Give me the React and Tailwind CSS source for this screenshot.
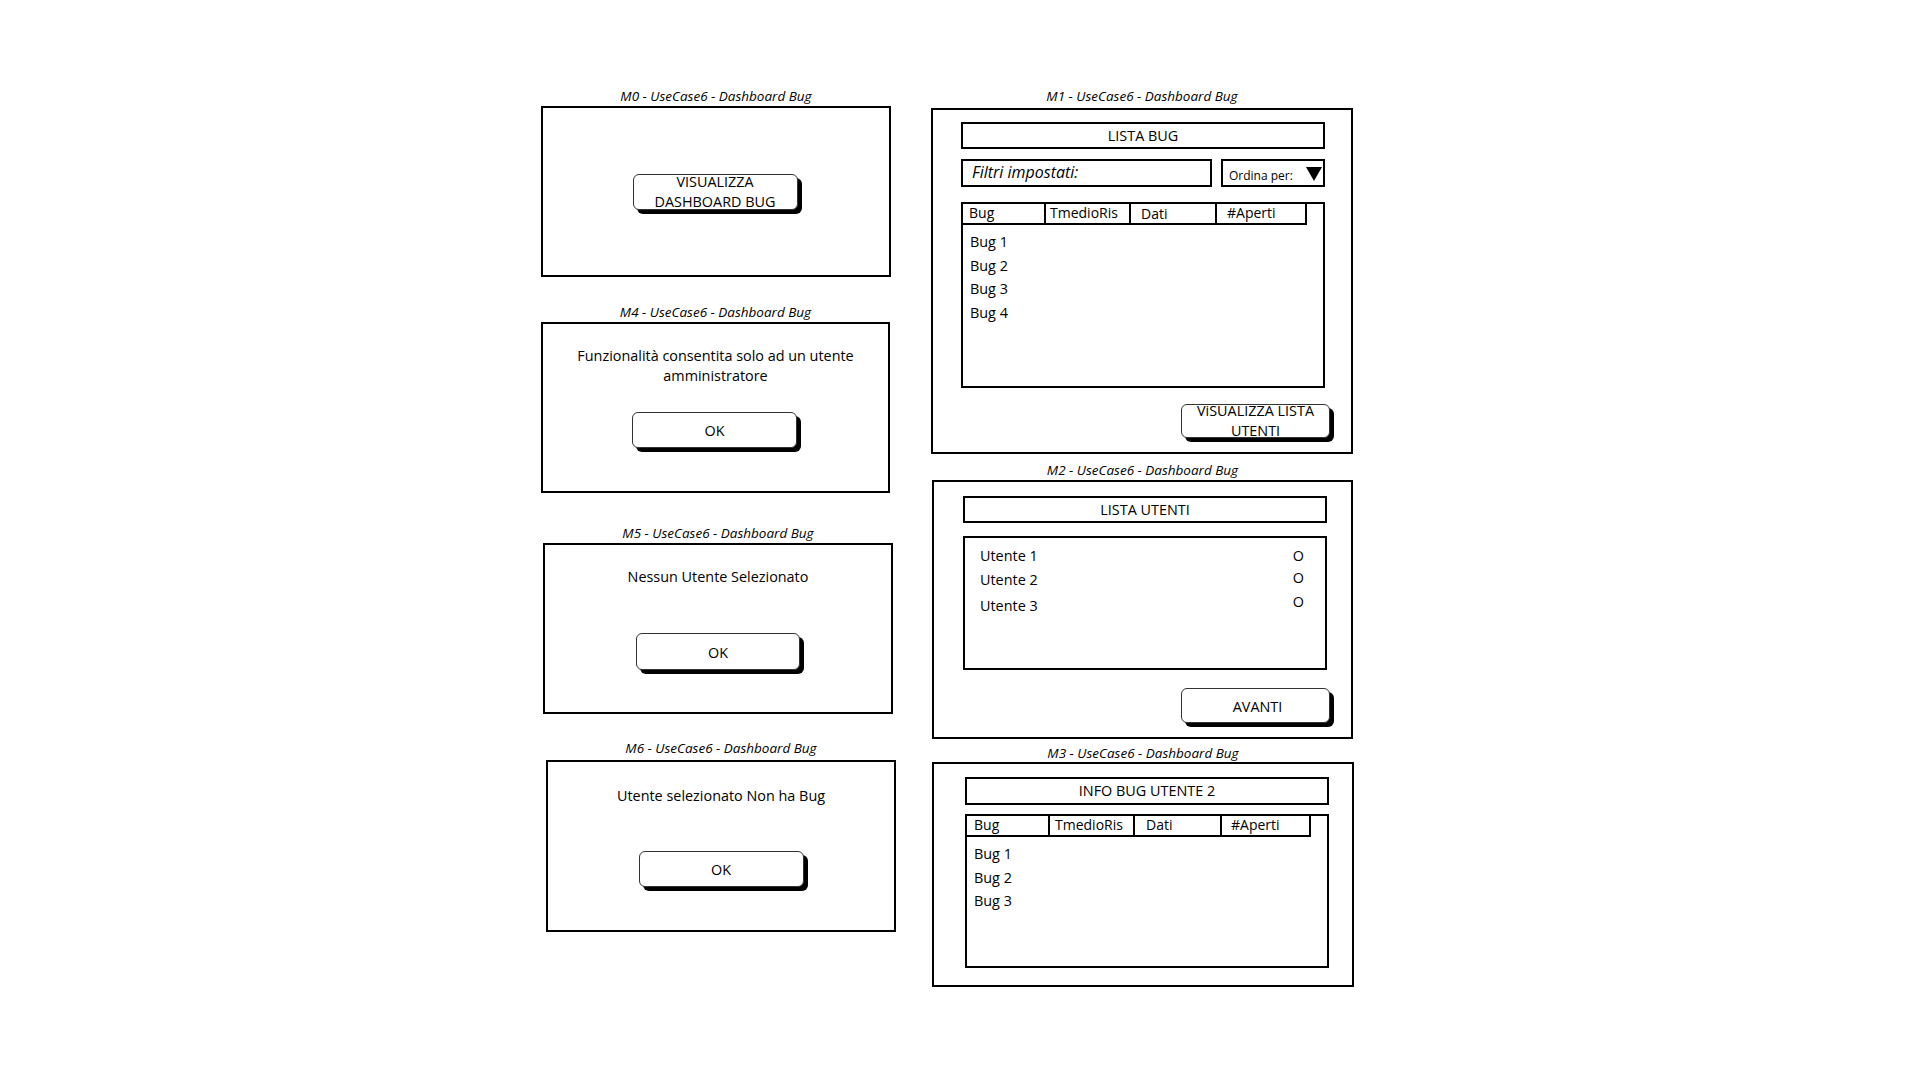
import React from 'react';

const font = "font-['Open_Sans',sans-serif]";

function Title({ children, mb }) {
  return (
    <div className={`text-[13.5px] italic leading-[16px] text-center text-black ${mb}`}>{children}</div>
  );
}

function Bottone({ children, className = '' }) {
  return (
    <div
      className={`bg-white border border-[#333] rounded-[6px] shadow-[4px_4px_0_0_#000] text-[14.4px] text-black text-center ${className}`}
    >
      {children}
    </div>
  );
}

function Tabella({ cells, rows, height }) {
  return (
    <div className={`w-[364px] border-2 border-black ${height}`}>
      <div className="flex h-[21px]">
        {cells.map((c) => (
          <div
            key={c.label}
            className={`h-full border-r-2 border-b-2 border-black text-[14px] leading-[17px] ${c.w} ${c.pl}`}
          >
            {c.label}
          </div>
        ))}
      </div>
      <div className="pt-[5px] pl-[7px] text-[14.4px] leading-[23.5px]">
        {rows.map((r) => (
          <div key={r}>{r}</div>
        ))}
      </div>
    </div>
  );
}

function BoxTitolo({ children, h }) {
  return (
    <div className={`w-[364px] border-2 border-black flex items-center justify-center text-[14.4px] ${h}`}>
      {children}
    </div>
  );
}

export default function App() {
  return (
    <div className={`w-[1920px] h-[1080px] bg-white text-black flex pt-[88px] pl-[541px] ${font}`}>
      {/* colonna sinistra */}
      <div className="w-[390px] flex flex-col items-start">
        <div>
          <Title mb="mb-[2px]">M0 - UseCase6 - Dashboard Bug</Title>
          <div className="w-[350px] h-[171px] border-2 border-black flex items-center justify-center">
            <Bottone className="w-[165px] h-[36px] flex flex-col items-center justify-center leading-[20px] -translate-x-[1px]">
              <span>VISUALIZZA</span>
              <span>DASHBOARD BUG</span>
            </Bottone>
          </div>
        </div>

        <div className="mt-[27px]">
          <Title mb="mb-[2px]">M4 - UseCase6 - Dashboard Bug</Title>
          <div className="w-[349px] h-[171px] border-2 border-black flex flex-col items-center pt-[22px]">
            <div className="text-[14.4px] leading-[20px] text-center w-[290px]">
              Funzionalità consentita solo ad un utente amministratore
            </div>
            <Bottone className="mt-[26px] w-[165px] h-[36px] leading-[36px] -translate-x-[1px]">OK</Bottone>
          </div>
        </div>

        <div className="mt-[32px] ml-[2px]">
          <Title mb="mb-[2px]">M5 - UseCase6 - Dashboard Bug</Title>
          <div className="w-[350px] h-[171px] border-2 border-black flex flex-col items-center pt-[22px]">
            <div className="text-[14.4px] leading-[20px] text-center">Nessun Utente Selezionato</div>
            <Bottone className="mt-[46px] w-[164px] h-[37px] leading-[37px]">OK</Bottone>
          </div>
        </div>

        <div className="mt-[26px] ml-[5px]">
          <Title mb="mb-[4px]">M6 - UseCase6 - Dashboard Bug</Title>
          <div className="w-[350px] h-[172px] border-2 border-black flex flex-col items-center pt-[24px]">
            <div className="text-[14.4px] leading-[20px] text-center">Utente selezionato Non ha Bug</div>
            <Bottone className="mt-[45px] w-[165px] h-[36px] leading-[36px]">OK</Bottone>
          </div>
        </div>
      </div>

      {/* colonna destra */}
      <div className="flex flex-col items-start">
        <div>
          <Title mb="mb-[4px]">M1 - UseCase6 - Dashboard Bug</Title>
          <div className="w-[422px] h-[346px] border-2 border-black pl-[28px] pt-[12px]">
            <BoxTitolo h="h-[27px]">LISTA BUG</BoxTitolo>
            <div className="mt-[10px] flex gap-[9px] h-[28px]">
              <div className="w-[251px] h-full border-2 border-black italic text-[16px] leading-[22px] pl-[9px]">
                Filtri impostati:
              </div>
              <div className="w-[104px] h-full border-2 border-black flex items-center justify-between pl-[6px] pr-[1px]">
                <span className="text-[12px] pt-[5px]">Ordina per:</span>
                <svg width="16" height="14" viewBox="0 0 16 14" className="mt-[2px]">
                  <polygon points="0,0 16,0 8,14" fill="#000" />
                </svg>
              </div>
            </div>
            <div className="mt-[15px]">
              <Tabella
                height="h-[186px]"
                cells={[
                  { label: 'Bug', w: 'w-[83px]', pl: 'pl-[6px]' },
                  { label: 'TmedioRis', w: 'w-[85px]', pl: 'pl-[4px]' },
                  { label: 'Dati', w: 'w-[86px]', pl: 'pl-[10px] pt-[1px]' },
                  { label: '#Aperti', w: 'w-[90px]', pl: 'pl-[10px]' },
                ]}
                rows={['Bug 1', 'Bug 2', 'Bug 3', 'Bug 4']}
              />
            </div>
            <Bottone className="mt-[16px] ml-[220px] w-[149px] h-[34px] flex flex-col items-center justify-center leading-[20px]">
              <span>ViSUALIZZA LISTA</span>
              <span>UTENTI</span>
            </Bottone>
          </div>
        </div>

        <div className="mt-[8px] ml-[1px]">
          <Title mb="mb-[2px]">M2 - UseCase6 - Dashboard Bug</Title>
          <div className="w-[421px] h-[259px] border-2 border-black pl-[29px] pt-[14px]">
            <BoxTitolo h="h-[27px]">LISTA UTENTI</BoxTitolo>
            <div className="mt-[13px] w-[364px] h-[134px] border-2 border-black pt-[6px] pl-[15px] pr-[21px] text-[14.4px] leading-[24px]">
              {['Utente 1', 'Utente 2', 'Utente 3'].map((u, i) => (
                <div key={u} className={`flex justify-between ${i === 2 ? 'mt-[2px]' : ''}`}>
                  <span>{u}</span>
                  <span className={i === 2 ? '-translate-y-[4px]' : i === 1 ? '-translate-y-[2px]' : ''}>O</span>
                </div>
              ))}
            </div>
            <Bottone className="mt-[18px] ml-[218px] w-[149px] h-[35px] leading-[35px]">
              <span className="pl-[4px]">AVANTI</span>
            </Bottone>
          </div>
        </div>

        <div className="mt-[6px] ml-[1px]">
          <Title mb="mb-[1px]">M3 - UseCase6 - Dashboard Bug</Title>
          <div className="w-[422px] h-[225px] border-2 border-black pl-[31px] pt-[13px]">
            <BoxTitolo h="h-[28px]">INFO BUG UTENTE 2</BoxTitolo>
            <div className="mt-[9px]">
              <Tabella
                height="h-[154px]"
                cells={[
                  { label: 'Bug', w: 'w-[83px]', pl: 'pl-[7px]' },
                  { label: 'TmedioRis', w: 'w-[85px]', pl: 'pl-[5px]' },
                  { label: 'Dati', w: 'w-[87px]', pl: 'pl-[11px]' },
                  { label: '#Aperti', w: 'w-[89px]', pl: 'pl-[9px]' },
                ]}
                rows={['Bug 1', 'Bug 2', 'Bug 3']}
              />
            </div>
          </div>
        </div>
      </div>
    </div>
  );
}
